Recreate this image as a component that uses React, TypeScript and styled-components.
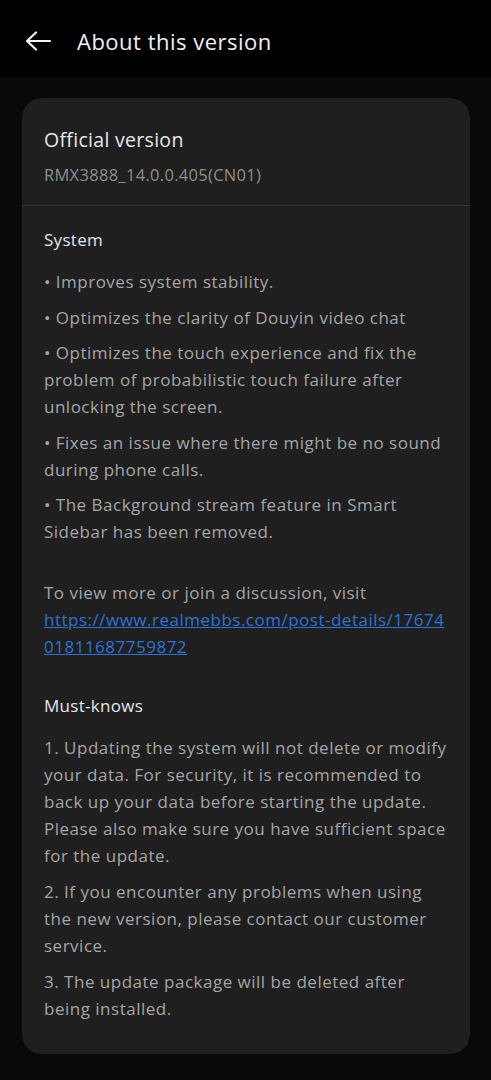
import styled, { createGlobalStyle } from 'styled-components';

const GlobalStyle = createGlobalStyle`
  html, body {
    margin: 0;
    padding: 0;
    background: #090909;
  }
  body {
    font-family: "Open Sans", "Noto Sans", sans-serif;
    -webkit-font-smoothing: antialiased;
  }
`;

const Page = styled.div`
  width: 491px;
  min-height: 1080px;
  background: #090909;
  display: flex;
  flex-direction: column;
`;

const Header = styled.header`
  height: 77px;
  background: #000;
  display: flex;
  align-items: center;
  padding: 5px 0 0 24px;
  box-sizing: border-box;
  gap: 26px;
`;

const BackButton = styled.button`
  border: none;
  background: none;
  padding: 0;
  width: 27px;
  height: 27px;
  display: flex;
  align-items: center;
  justify-content: center;
  color: #f2f2f2;
`;

const Title = styled.h1`
  margin: 0;
  font-size: 22px;
  font-weight: 400;
  letter-spacing: 0.5px;
  color: #f0f0f0;
`;

const Body = styled.main`
  padding: 21px 21px 24px 22px;
`;

const Card = styled.section`
  background: #1f1f1f;
  border-radius: 20px;
  overflow: hidden;
`;

const VersionBlock = styled.div`
  padding: 27px 22px 17px;
  border-bottom: 1px solid #343434;
`;

const VersionTitle = styled.div`
  font-size: 19.5px;
  letter-spacing: 0.3px;
  color: #e8e8e8;
  line-height: 30px;
`;

const VersionCode = styled.div`
  margin-top: 7px;
  font-size: 16.5px;
  letter-spacing: 0.3px;
  color: #8f8f8f;
  line-height: 26px;
`;

const Notes = styled.div`
  padding: 21px 22px 23px;
`;

const SectionTitle = styled.div<{ $top?: number }>`
  font-size: 17px;
  letter-spacing: 0.3px;
  color: #e6e6e6;
  line-height: 26px;
  margin-top: ${({ $top }) => $top ?? 0}px;
  margin-bottom: 15px;
`;

const Para = styled.p<{ $top?: number; $gap?: number }>`
  margin: ${({ $top }) => $top ?? 0}px 0 ${({ $gap }) => $gap ?? 8.5}px;
  font-size: 17px;
  letter-spacing: 0.5px;
  line-height: 27px;
  color: #a6a6a6;
`;

const Link = styled.a`
  color: #2b74d8;
  text-decoration: underline;
  word-break: break-all;
`;

const ArrowIcon = () => (
  <svg width="26" height="20" viewBox="0 0 26 20" fill="none">
    <path
      d="M25 10H2M11 1.5L2 10l9 8.5"
      stroke="currentColor"
      strokeWidth="2.2"
      strokeLinecap="round"
      strokeLinejoin="round"
    />
  </svg>
);

const systemNotes = [
  '• Improves system stability.',
  '• Optimizes the clarity of Douyin video chat',
  '• Optimizes the touch experience and fix the problem of probabilistic touch failure after unlocking the screen.',
  '• Fixes an issue where there might be no sound during phone calls.',
  '• The Background stream feature in Smart Sidebar has been removed.',
];

const mustKnows = [
  '1. Updating the system will not delete or modify your data. For security, it is recommended to back up your data before starting the update. Please also make sure you have sufficient space for the update.',
  '2. If you encounter any problems when using the new version, please contact our customer service.',
  '3. The update package will be deleted after being installed.',
];

const App = () => {
  return (
    <Page>
      <GlobalStyle />
      <Header>
        <BackButton aria-label="Back">
          <ArrowIcon />
        </BackButton>
        <Title>About this version</Title>
      </Header>
      <Body>
        <Card>
          <VersionBlock>
            <VersionTitle>Official version</VersionTitle>
            <VersionCode>RMX3888_14.0.0.405(CN01)</VersionCode>
          </VersionBlock>
          <Notes>
            <SectionTitle>System</SectionTitle>
            {systemNotes.map((each, index) => (
              <Para key={index}>{each}</Para>
            ))}
            <Para $top={34}>
              To view more or join a discussion, visit
              <br />
              <Link href="#">
                https://www.realmebbs.com/post-details/1767401811687759872
              </Link>
            </Para>
            <SectionTitle $top={33}>Must-knows</SectionTitle>
            {mustKnows.map((each, index) => (
              <Para key={index} $gap={9}>
                {each}
              </Para>
            ))}
          </Notes>
        </Card>
      </Body>
    </Page>
  );
};

export default App;
